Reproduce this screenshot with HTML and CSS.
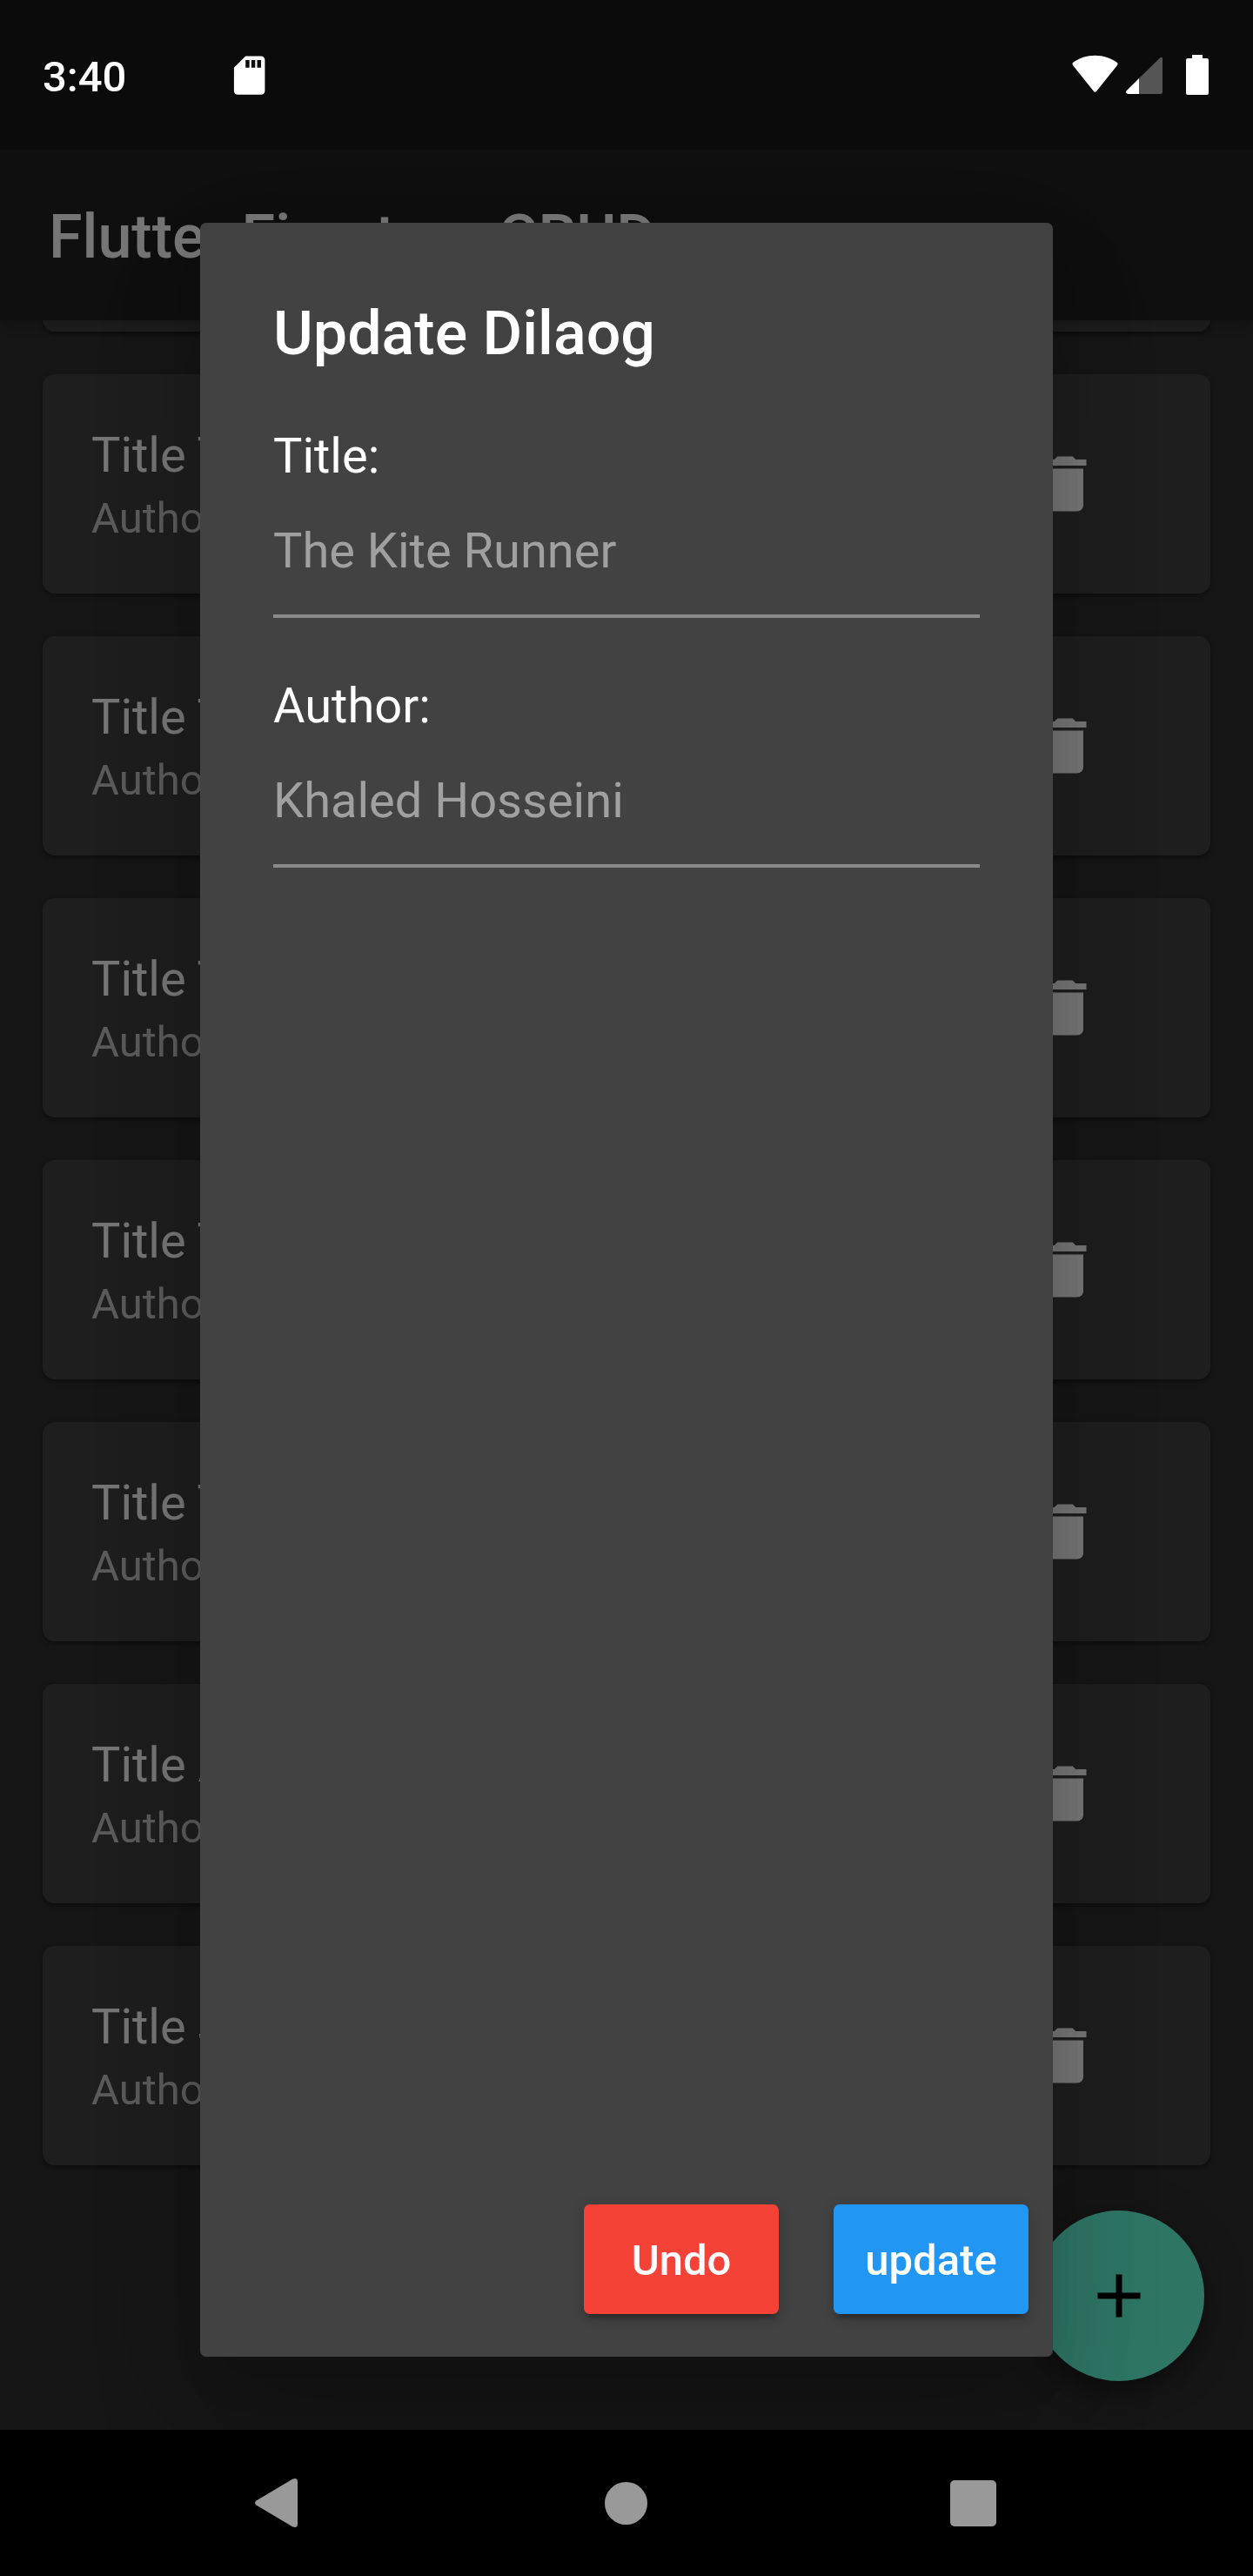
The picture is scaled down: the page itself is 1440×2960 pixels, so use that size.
FILE: index.html
```html
<!DOCTYPE html>
<html lang="en">
<head>
<meta charset="utf-8">
<title>Flutter Firestore CRUD</title>
<link rel="stylesheet" href="styles.css">
</head>
<body>
<svg width="0" height="0" class="defs">
  <symbol id="trash" viewBox="0 0 24 24"><path d="M6 19c0 1.1.9 2 2 2h8c1.1 0 2-.9 2-2V7H6v12zM19 4h-3.5l-1-1h-5l-1 1H5v2h14V4z"/></symbol>
</svg>
<div class="phone">
  <div class="screen">
    <header class="appbar"><h1>Flutter Firestore CRUD</h1></header>
    <main class="list">
      <article class="card"></article>
      <article class="card"><div class="info"><p class="name">Title The</p><p class="by">Author</p></div><svg class="delete"><use href="#trash"/></svg></article>
      <article class="card"><div class="info"><p class="name">Title The</p><p class="by">Author</p></div><svg class="delete"><use href="#trash"/></svg></article>
      <article class="card"><div class="info"><p class="name">Title The</p><p class="by">Author</p></div><svg class="delete"><use href="#trash"/></svg></article>
      <article class="card"><div class="info"><p class="name">Title The</p><p class="by">Author</p></div><svg class="delete"><use href="#trash"/></svg></article>
      <article class="card"><div class="info"><p class="name">Title The</p><p class="by">Author</p></div><svg class="delete"><use href="#trash"/></svg></article>
      <article class="card"><div class="info"><p class="name">Title A</p><p class="by">Author</p></div><svg class="delete"><use href="#trash"/></svg></article>
      <article class="card"><div class="info"><p class="name">Title J</p><p class="by">Author</p></div><svg class="delete"><use href="#trash"/></svg></article>
    </main>
    <button class="fab" aria-label="Add"><svg viewBox="0 0 24 24"><path d="M19 13h-6v6h-2v-6H5v-2h6V5h2v6h6v2z"/></svg></button>
    <div class="scrim">
      <section class="dialog">
        <h2>Update Dilaog</h2>
        <label>Title:</label>
        <div class="field">The Kite Runner</div>
        <label>Author:</label>
        <div class="field">Khaled Hosseini</div>
        <div class="actions">
          <button class="btn undo">Undo</button>
          <button class="btn update">update</button>
        </div>
      </section>
    </div>
    <div class="status">
      <span class="time">3:40</span>
      <svg class="sd" viewBox="0 0 24 24"><path d="M18 2h-8L4.02 8 4 20c0 1.100.9 2 2 2h12c1.100 0 2-.9 2-2V4c0-1.100-.9-2-2-2zm-6 6h-2V4h2v4zm3 0h-2V4h2v4zm3 0h-2V4h2v4z"/></svg>
      <svg class="tray" viewBox="0 0 158 48">
        <path d="M1.200 12.200Q-.4 10.400 1.300 8.800C8 3.600 17 .7 26.500 .7S45 3.600 51.700 8.800Q53.400 10.400 51.800 12.200L28.200 41.800Q26.500 43.800 24.800 41.800Z"/>
        <path class="dim" d="M77 27 100.600 4Q104 1.500 104 4.500V43Q104 45 102 45H77Z"/>
        <path d="M77 27V45H64.500Q60.500 44 62.700 41.300Z"/>
        <path d="M138 0h12v4h5q2 0 2 2v38q0 2-2 2h-22q-2 0-2-2V6q0-2 2-2h5z"/>
      </svg>
    </div>
  </div>
  <nav class="navbar">
    <svg viewBox="0 0 49 56"><path d="M1.500 25.500 43 .8Q49-1.500 49 4V52Q49 57.500 43 55.200L1.500 30.500Q-1.500 28 1.500 25.500Z"/></svg>
    <span class="home"></span>
    <span class="recent"></span>
  </nav>
</div>
</body>
</html>
```
FILE: styles.css
```css
* { box-sizing: border-box; margin: 0; padding: 0; }
body { width: 1440px; height: 2960px; overflow: hidden; background: #000; color: #fff; font-family: Roboto, sans-serif; }
button { border: 0; font: inherit; }
.defs { position: absolute; }
.phone { display: flex; flex-direction: column; height: 2960px; }
.screen { position: relative; height: 2792px; overflow: hidden; background: #303030; }

.appbar { position: relative; z-index: 1; height: 368px; padding: 174px 56px 0; background: #212121; box-shadow: 0 4px 14px rgba(0,0,0,.12), 0 8px 14px rgba(0,0,0,.06); }
.appbar h1 { font-size: 70px; font-weight: 500; line-height: 194px; white-space: nowrap; padding-top: 1px; }

.list { display: flex; flex-direction: column; gap: 49px; padding: 0 49px; margin-top: -239.500px; }
.card { display: flex; justify-content: space-between; align-items: center; height: 252px; padding: 0 125.500px 0 56px; border-radius: 14px; background: #424242; box-shadow: 0 3px 4px rgba(0,0,0,.24), 0 2px 7px rgba(0,0,0,.2); }
.info { display: flex; flex-direction: column; gap: 3px; padding-top: 7px; }
.name { font-size: 56px; line-height: 70px; }
.by { font-size: 49px; line-height: 70px; color: rgba(255,255,255,.7); }
.delete { width: 84px; height: 84px; fill: #fff; }

.fab { position: absolute; right: 56px; bottom: 56px; display: grid; place-items: center; width: 196px; height: 196px; border-radius: 50%; background: #64ffda; box-shadow: 0 10px 18px rgba(0,0,0,.2), 0 20px 35px rgba(0,0,0,.14), 0 4px 60px rgba(0,0,0,.12); }
.fab svg { width: 84px; height: 84px; }

.scrim { position: absolute; inset: 0; z-index: 2; padding: 256px 230px 84px; background: rgba(0,0,0,.54); }
.dialog { display: flex; flex-direction: column; height: 2452px; padding: 85px 28px 49px 84px; border-radius: 7px; background: #424242; box-shadow: 0 38px 52px -24px rgba(0,0,0,.16), 0 84px 133px 0 rgba(0,0,0,.14), 0 31px 130px 0 rgba(0,0,0,.06); }
.dialog h2 { font-size: 70px; font-weight: 500; line-height: 84px; margin-bottom: 63.500px; }
.dialog label { font-size: 56px; line-height: 70px; }
.field { width: 812px; height: 151px; margin-bottom: 66px; padding-top: 39.500px; border-bottom: 4px solid #898989; font-size: 56px; line-height: 70px; color: #a0a0a0; }
.actions { display: flex; justify-content: flex-end; gap: 63px; margin-top: auto; }
.btn { width: 224px; height: 126px; padding-top: 2px; border-radius: 7px; color: #fff; font-size: 49px; font-weight: 500; box-shadow: 0 10px 4px -7px rgba(0,0,0,.2), 0 7px 7px rgba(0,0,0,.14), 0 3px 17px rgba(0,0,0,.12); }
.undo { background: #f44336; }
.update { background: #2196f3; }

.status { position: absolute; inset: 0 0 auto; z-index: 3; display: flex; align-items: flex-start; height: 172px; padding: 59px 50px 0 49px; background: #0b0b0b; }
.time { width: 210.800px; font-size: 49px; font-weight: 500; line-height: 59px; }
.status svg { fill: #fff; }
.sd { width: 53.300px; height: 53.300px; margin-top: .5px; }
.tray { width: 158px; height: 48px; margin: 4px 0 0 auto; }
.status .dim { fill: #555; }

.navbar { display: flex; align-items: center; height: 168px; padding-left: 293px; background: #000; }
.navbar svg { width: 49px; height: 56px; fill: #999; }
.home { width: 49px; height: 49px; margin-left: 353px; border-radius: 50%; background: #999; }
.recent { width: 53px; height: 53px; margin-left: 347.500px; border-radius: 5px; background: #999; }
```
